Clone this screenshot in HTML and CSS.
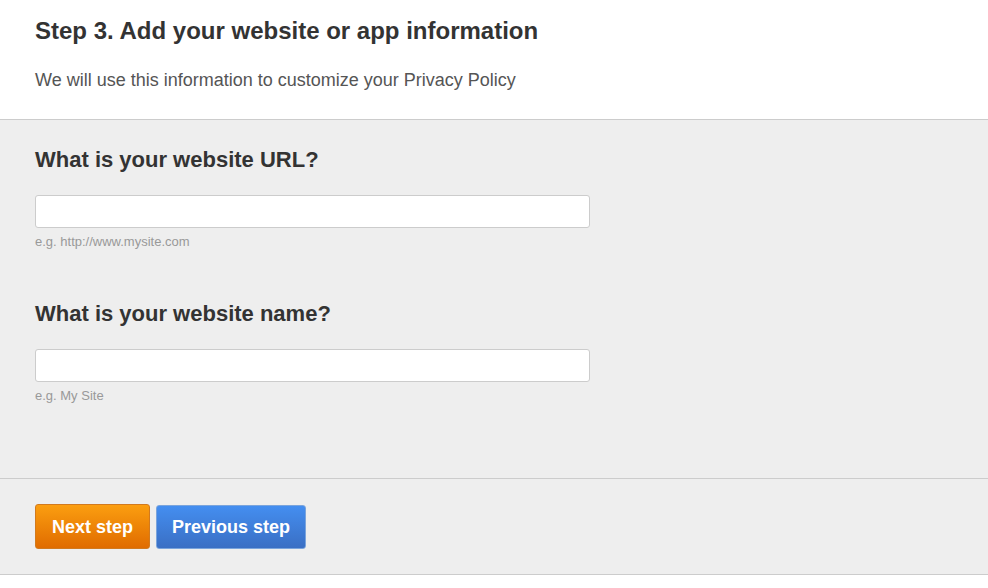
FILE: index.html
```html
<!DOCTYPE html>
<html>
<head>
<meta charset="utf-8">
<link rel="stylesheet" href="styles.css">
</head>
<body>
<div class="intro">
  <h1 class="title">Step 3. Add your website or app information</h1>
  <p class="subtitle">We will use this information to customize your Privacy Policy</p>
</div>
<div class="form">
  <div class="field">
    <h2 class="label">What is your website URL?</h2>
    <input class="input" type="text">
    <div class="hint">e.g. http://www.mysite.com</div>
  </div>
  <div class="field">
    <h2 class="label">What is your website name?</h2>
    <input class="input" type="text">
    <div class="hint">e.g. My Site</div>
  </div>
</div>
<div class="actions">
  <button class="btn btn-next">Next step</button>
  <button class="btn btn-prev">Previous step</button>
</div>
</body>
</html>
```
FILE: styles.css
```css
html, body {
  margin: 0;
  padding: 0;
  background: #fff;
  font-family: "Liberation Sans", Arial, sans-serif;
}
.intro {
  padding: 17px 35px 0;
  height: 102px;
  border-bottom: 1px solid #ccc;
}
.title {
  margin: 0;
  font-size: 24px;
  line-height: 28px;
  font-weight: bold;
  color: #333;
}
.subtitle {
  margin: 25px 0 0;
  font-size: 18px;
  line-height: 20px;
  color: #555;
}
.form {
  background: #eee;
  padding: 28px 35px 0;
  height: 330px;
  border-bottom: 1px solid #ccc;
}
.field {
  margin-bottom: 53px;
}
.label {
  margin: 0;
  font-size: 22px;
  line-height: 24px;
  font-weight: bold;
  color: #333;
}
.input {
  display: block;
  box-sizing: border-box;
  margin-top: 23px;
  width: 555px;
  height: 33px;
  border: 1px solid #ccc;
  border-radius: 3px;
  background: #fff;
}
.hint {
  margin-top: 7px;
  font-size: 13px;
  line-height: 14px;
  color: #999;
}
.actions {
  background: #eee;
  height: 96px;
  padding: 25px 35px 0;
  box-sizing: border-box;
  border-bottom: 1px solid #ccc;
  display: flex;
  gap: 6px;
  align-items: flex-start;
}
.btn {
  font-family: "Liberation Sans", Arial, sans-serif;
  font-weight: bold;
  font-size: 18px;
  color: #fff;
  border-radius: 3px;
  height: 45px;
  padding: 2px 12px 0;
  cursor: pointer;
}
.btn-next {
  width: 115px;
  border: 1px solid #d27a1e;
  background: linear-gradient(#fb9e10, #e06c00);
}
.btn-prev {
  width: 150px;
  height: 44px;
  margin-top: 1px;
  padding-top: 1px;
  border: 1px solid #7aa4dc;
  background: linear-gradient(#448ef0, #3a6fc4);
}
```
